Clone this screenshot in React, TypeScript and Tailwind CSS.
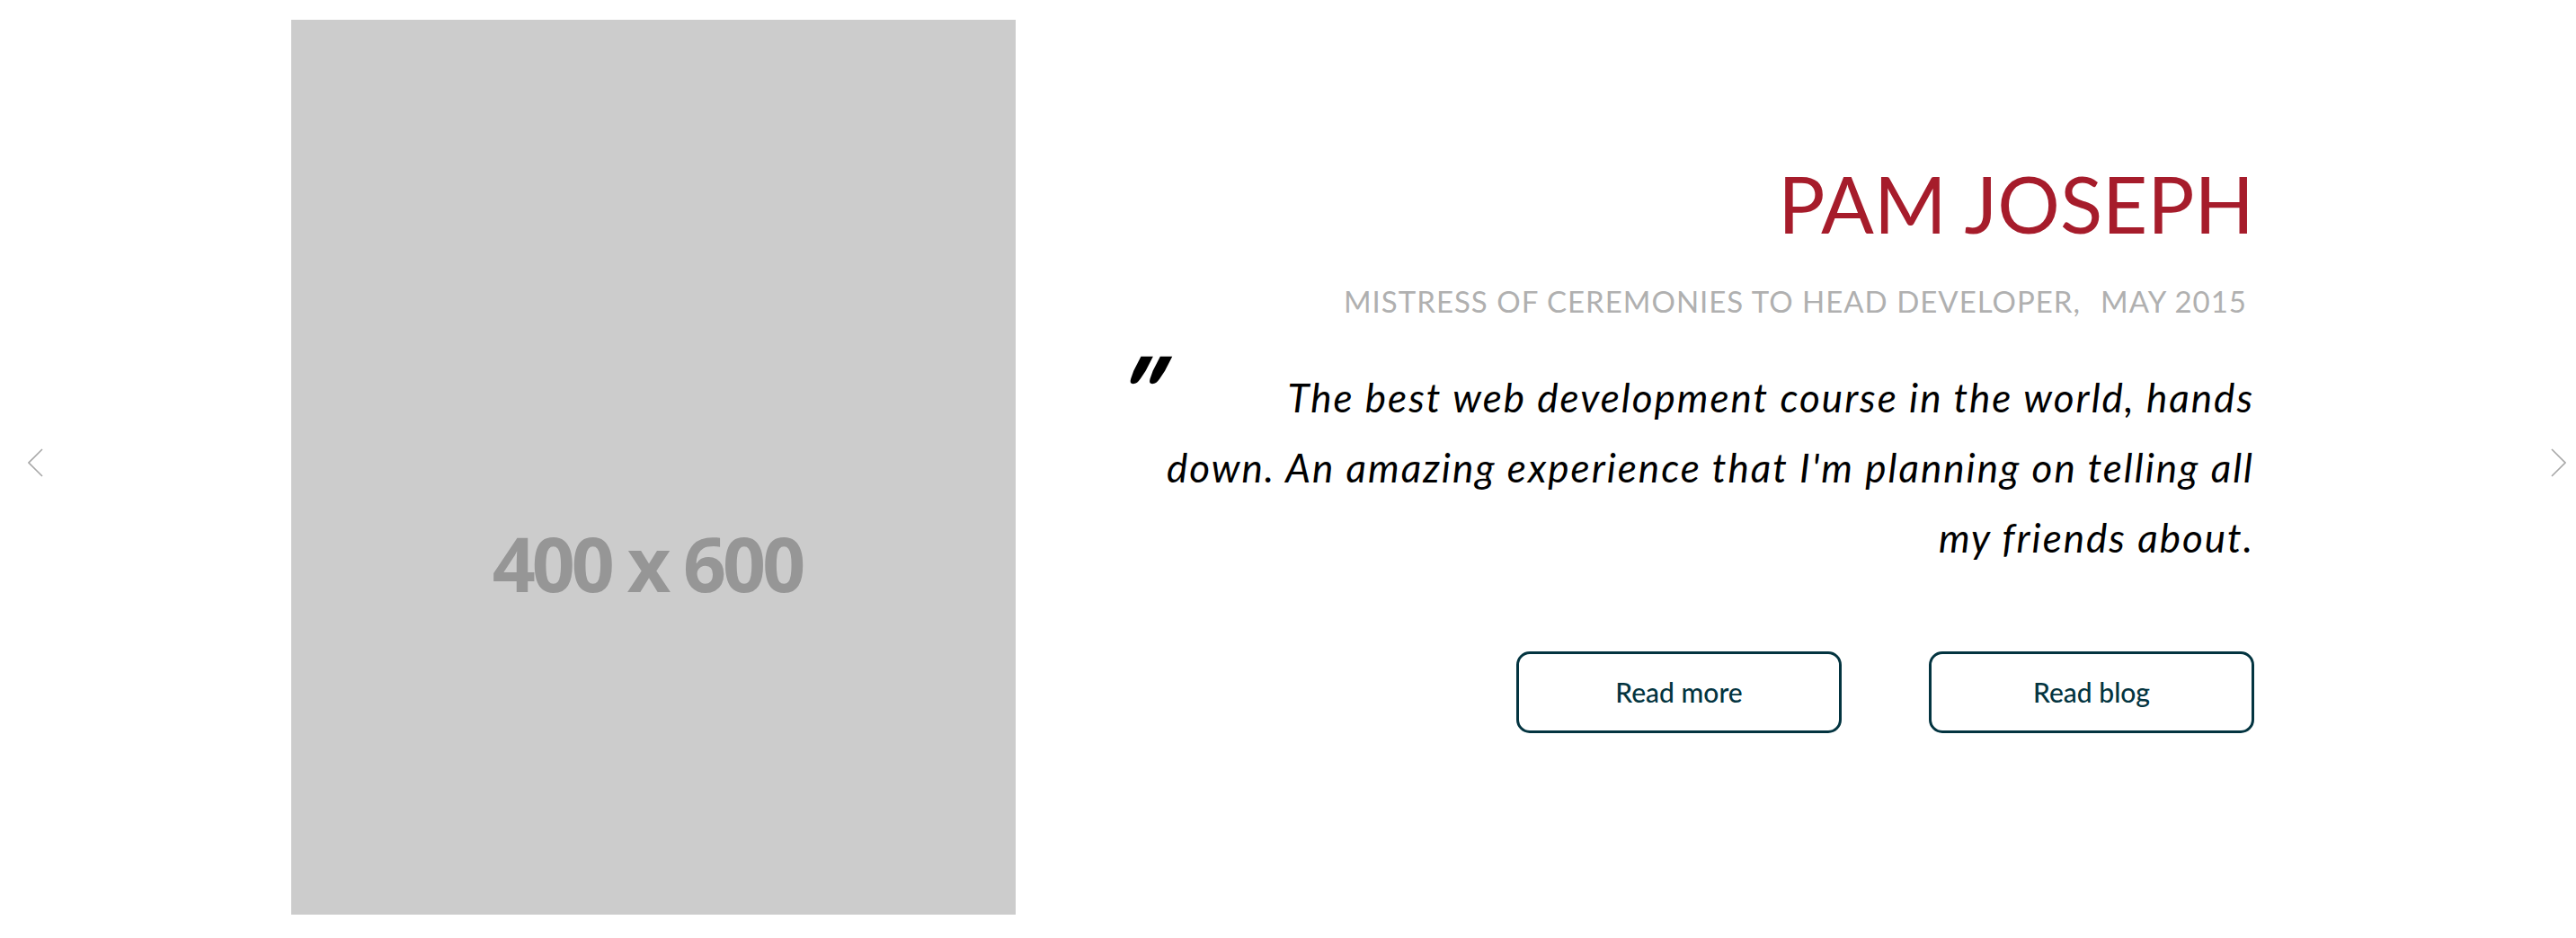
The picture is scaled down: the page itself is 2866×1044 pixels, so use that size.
const testimonial = {
  name: "PAM JOSEPH",
  role: "MISTRESS OF CEREMONIES TO HEAD DEVELOPER,",
  date: "MAY 2015",
  quote: [
    "The best web development course in the world, hands",
    "down. An amazing experience that I'm planning on telling all",
    "my friends about.",
  ],
};

const futura = "font-['Lato','Noto_Sans',sans-serif]";

function Chevron({ dir }: { dir: "left" | "right" }) {
  return (
    <svg width="18" height="34" viewBox="0 0 18 34" fill="none" stroke="#a8a8a8" strokeWidth="1.6">
      {dir === "left" ? <polyline points="16,2 1,17 16,32" /> : <polyline points="2,2 17,17 2,32" />}
    </svg>
  );
}

export default function App() {
  return (
    <section className={`relative h-[1044px] w-full overflow-hidden bg-white ${futura}`}>
      {/* carousel controls */}
      <button className="absolute left-[31px] top-[498px]" aria-label="Previous">
        <Chevron dir="left" />
      </button>
      <button className="absolute right-[11px] top-[498px]" aria-label="Next">
        <Chevron dir="right" />
      </button>

      <div className="flex items-start pl-[324px] pr-[358px] pt-[22px]">
        {/* Placeholder photo, 400x600 scaled and cropped */}
        <div className="h-[996px] w-[806px] shrink-0 overflow-hidden">
          <div className="flex h-[1209px] w-full items-center justify-center bg-[#cccccc] pr-[14px]">
            <span className="font-['Open_Sans',sans-serif] text-[84px] font-bold tracking-[-4px] text-[#969696]">
              400 x 600
            </span>
          </div>
        </div>

        {/* Testimonial */}
        <div className="ml-[128px] flex flex-1 flex-col items-end pt-[161px] text-right">
          <h2 className="text-[87px] font-normal leading-none text-[#a61c2b]">
            {testimonial.name}
          </h2>
          <p className="mt-[49px] mr-[8px] text-[33px] leading-none tracking-[1px] text-[#b0b0b0]">
            {testimonial.role}
            <span className="ml-[22px]">{testimonial.date}</span>
          </p>

          <div className="mt-[51px] w-full">
            <span className="float-left -mt-[24px] ml-[0px] inline-block h-[60px] -skew-x-[27deg] text-[112px] font-black leading-none text-black">
              "
            </span>
            <p className="text-[44px] italic leading-[78px] tracking-[2px] text-black">
              {testimonial.quote.map((line, i) => (
                <span key={i}>
                  {line}
                  {i < testimonial.quote.length - 1 && <br />}
                </span>
              ))}
            </p>
          </div>

          <div className="mt-[88px] flex gap-[97px]">
            {["Read more", "Read blog"].map((label) => (
              <button
                key={label}
                className="flex h-[91px] w-[362px] items-center justify-center rounded-[15px] border-[3px] border-[#033440] text-[30px] font-medium text-[#033440]"
              >
                {label}
              </button>
            ))}
          </div>
        </div>
      </div>
    </section>
  );
}
